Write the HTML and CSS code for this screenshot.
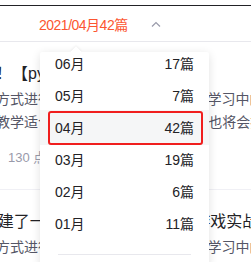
FILE: index.html
```html
<!DOCTYPE html>
<html lang="zh-CN">
<head>
  <meta charset="UTF-8">
  <meta name="viewport" content="width=device-width, initial-scale=1.0">
  <title>文章归档</title>
  <link rel="stylesheet" href="styles.css">
</head>
<body>
  <div class="topbar"></div>

  <!-- 归档下拉 -->
  <div class="archive">
    <div class="archive-head">
      <span class="archive-current">2021/04月42篇</span>
      <svg class="archive-arrow" width="10" height="6" viewBox="0 0 10 6">
        <polyline points="1,5.5 5,1.5 9,5.5" fill="none" stroke="#999aaa" stroke-width="1.2"/>
      </svg>
    </div>

    <div class="archive-menu">
      <ul class="month-list">
        <li class="month-item"><span>06月</span><span>17篇</span></li>
        <li class="month-item"><span>05月</span><span>7篇</span></li>
        <li class="month-item active"><span>04月</span><span>42篇</span></li>
        <li class="month-item"><span>03月</span><span>19篇</span></li>
        <li class="month-item"><span>02月</span><span>6篇</span></li>
        <li class="month-item"><span>01月</span><span>11篇</span></li>
      </ul>
      <div class="menu-divider"></div>
    </div>
  </div>

  <!-- 文章列表 -->
  <ul class="article-list">
    <li class="article">
      <h4 class="article-title">七天学会写游戏！【python】零基础入门</h4>
      <p class="article-desc">本文用图文结合的方式进行讲解，以Python为例带你学习中的难点与重点<br>整体循序渐进，本教学适合有Py基础的朋友们，后续也将会持续更新</p>
      <div class="article-meta">130 点赞</div>
    </li>
    <li class="article">
      <h4 class="article-title">今天用Python搭建了一个完整的3D贪吃蛇小游戏实战</h4>
      <p class="article-desc">本文用图文结合的方式进行讲解，以Python为例带你学习中的游戏开发</p>
    </li>
  </ul>
</body>
</html>
```

FILE: styles.css
```css
body {
  margin: 0;
  font-family: "Liberation Sans", "Noto Sans CJK SC", sans-serif;
  background: #fff;
  color: #222226;
  overflow: hidden;
}

ul {
  list-style: none;
  margin: 0;
  padding: 0;
}

.topbar {
  height: 5px;
  border-bottom: 1px solid #222226;
}

/* 归档下拉 */
.archive {
  position: relative;
  z-index: 2;
}

.archive-head {
  height: 35px;
  display: flex;
  align-items: center;
  padding-left: 39px;
  border-bottom: 1px solid #e8e8ed;
}

.archive-current {
  font-size: 14px;
  letter-spacing: -0.5px;
  color: #fc5531;
}

.archive-arrow {
  margin-left: 23px;
}

.archive-menu {
  position: absolute;
  top: 46px;
  left: 40px;
  width: 169px;
  background: #fff;
  border-radius: 2px;
  box-shadow: 0 2px 10px rgba(0, 0, 0, 0.12);
  padding-bottom: 12px;
}

.archive-menu::before {
  content: "";
  position: absolute;
  top: -4px;
  left: 32px;
  width: 8px;
  height: 8px;
  background: #fff;
  transform: rotate(45deg);
  box-shadow: -1px -1px 2px rgba(0, 0, 0, 0.05);
}

.month-item {
  position: relative;
  display: flex;
  justify-content: space-between;
  padding: 0 15px 8px;
  font-size: 14px;
  line-height: 24px;
  color: #222226;
}

.month-item.active {
  margin: -6px 0 3px;
  padding: 6px 15px 5px;
  background: #f5f6f7;
}

/* 标注框 */
.month-item.active::after {
  content: "";
  position: absolute;
  top: 1px;
  right: 6px;
  bottom: 0;
  left: 8px;
  border: 2px solid #f01e1e;
  border-radius: 3px;
}

.menu-divider {
  height: 1px;
  margin: 10px 18px 0;
  background: #e8e8ed;
}

/* 文章列表 */
.article-list {
  margin-left: -116px;
  white-space: nowrap;
}

.article {
  padding: 20px 0 21px;
  border-bottom: 1px solid #f0f0f5;
}

.article-title {
  margin: 0;
  font-size: 16px;
  font-weight: normal;
  line-height: 24px;
  color: #222226;
}

.article-desc {
  margin: 2px 0 0;
  font-size: 14px;
  line-height: 23px;
  color: #555666;
}

.article-meta {
  margin-top: 14px;
  padding-left: 124px;
  font-size: 13px;
  line-height: 20px;
  color: #999aaa;
}
```
